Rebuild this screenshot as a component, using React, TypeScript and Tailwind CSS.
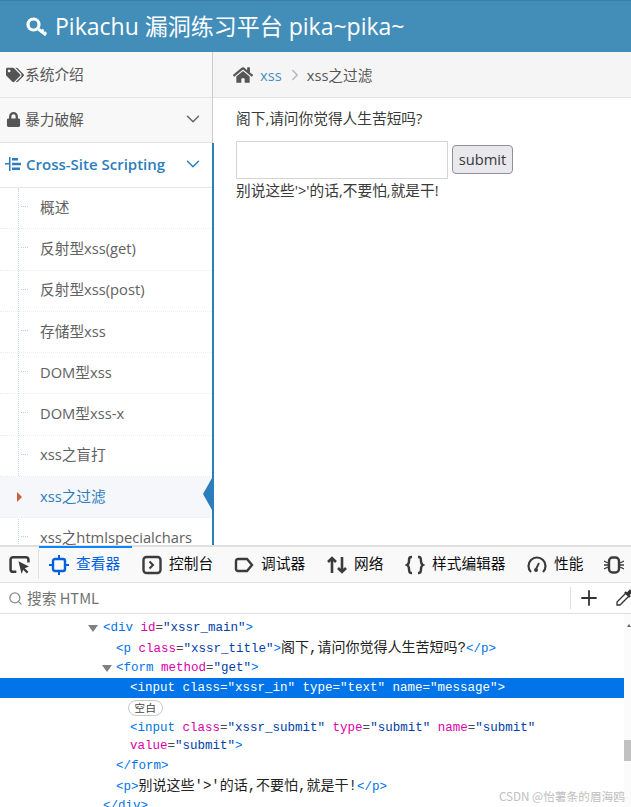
import { ChevronDown, ChevronRight, Plus, Search } from "lucide-react";
import { FaHome, FaLock, FaTags } from "react-icons/fa";

const cjk = '"Open Sans", "Noto Sans CJK SC", sans-serif';

const subItems = [
  "概述",
  "反射型xss(get)",
  "反射型xss(post)",
  "存储型xss",
  "DOM型xss",
  "DOM型xss-x",
  "xss之盲打",
  "xss之过滤",
  "xss之htmlspecialchars",
];

const Tabs = [
  { label: "查看器", active: true, w: "w-[93px]" },
  { label: "控制台", w: "w-[92px]" },
  { label: "调试器", w: "w-[93px]" },
  { label: "网络", w: "w-[78px]" },
  { label: "样式编辑器", w: "w-[122px]" },
  { label: "性能", w: "w-[87px]" },
];

function TabIcon({ i }: { i: number }) {
  const c = i === 0 ? "#0060df" : "#3b3b3b";
  return (
    <svg width="20" height="20" viewBox="0 0 20 20" fill="none" stroke={c} strokeWidth="2.4">
      {i === 0 && (
        <>
          <rect x="4" y="4" width="12" height="12" rx="2" />
          <path d="M10 0v4M10 16v4M0 10h4M16 10h4" strokeWidth="2" />
        </>
      )}
      {i === 1 && (
        <>
          <rect x="1.500" y="2" width="17" height="16" rx="3" />
          <path d="M7.500 6.500l3.500 3.500-3.500 3.500" strokeWidth="2" />
        </>
      )}
      {i === 2 && <path d="M2 6a2 2 0 0 1 2-2h9l5 6-5 6H4a2 2 0 0 1-2-2z" />}
      {i === 3 && <path d="M5 18V3M1 7l4-4 4 4M15 2v15M11 13l4 4 4-4" strokeWidth="2.6" />}
      {i === 4 && (
        <path d="M7 2H6C4 2 4 4 4 6s0 3-2 4c2 1 2 2 2 4s0 4 2 4h1M13 2h1c2 0 2 2 2 4s0 3 2 4c-2 1-2 2-2 4s0 4-2 4h-1" strokeWidth="2.4" />
      )}
      {i === 5 && (
        <>
          <path d="M4 17A8.500 8.500 0 1 1 16 17" strokeWidth="2.2" />
          <path d="M9 14l3-6" strokeWidth="1.8" />
          <circle cx="9" cy="15" r="2" fill={c} stroke="none" />
        </>
      )}
    </svg>
  );
}

function Tk({ c, children }: { c: string; children: React.ReactNode }) {
  return <span className={c}>{children}</span>;
}

const blue = "text-[#0074e8]";
const pink = "text-[#dd00a9]";
const gray = "text-[#4a4a4f]";
const zh = "text-[14px]";

export default function App() {
  return (
    <div className="flex h-[807px] w-[631px] flex-col overflow-hidden bg-white">
      {/* page */}
      <div className="h-[545px] shrink-0 overflow-hidden" style={{ fontFamily: cjk }}>
        <div className="flex h-[52px] items-center gap-[7px] border-t border-[#3a7fa8] bg-[#438eb9] pl-[26px] text-[23px] text-white">
          <svg width="22" height="20" viewBox="0 0 22 20" fill="none" stroke="#fff" className="shrink-0">
            <circle cx="7.500" cy="7.500" r="5.500" strokeWidth="3.200" />
            <path d="M11 11l9 7" strokeWidth="3" />
            <path d="M15 15l2.500-2.500M18 17l2-2" strokeWidth="2.400" />
          </svg>
          <span>Pikachu 漏洞练习平台 pika~pika~</span>
        </div>
        <div className="flex">
          {/* sidebar */}
          <div className="w-[213px] shrink-0 border-r border-[#cccccc] text-[14.7px] text-[#585858]">
            <div className="flex h-[46px] items-center border-b border-[#e5e5e5] bg-[#f8f8f8] pl-[6px]">
              <FaTags className="mr-[1px] size-[18px] text-[#555]" />
              <span>系统介绍</span>
            </div>
            <div className="flex h-[45px] items-center border-b border-[#e5e5e5] bg-[#f8f8f8] pb-[2px] pl-[6px] pr-[8px]">
              <FaLock className="mr-[4px] size-[15px] text-[#555]" />
              <span className="flex-1">暴力破解</span>
              <ChevronDown className="size-[22px] text-[#666]" strokeWidth={1.6} />
            </div>
            <div className="relative -mr-[2px] border-r-2 border-[#2b7dbc]">
              <div className="flex h-[45px] items-center border-b border-[#e5e5e5] pb-[2px] pl-[5px] pr-[8px] font-semibold text-[#2b7dbc]">
                <svg className="mr-[5px] shrink-0" width="16" height="16" viewBox="0 0 16 16" fill="#2b7dbc">
                  <path d="M4 1h1.500v14H4zM0 7h4v1.500H0zM7 2h6v2.600H7zM7 6.800h9v2.400H7zM7 11.500h8V14H7z" />
                </svg>
                <span className="flex-1 text-[15px]">Cross-Site Scripting</span>
                <ChevronDown className="size-[22px]" strokeWidth={1.6} />
              </div>
              <div className="relative">
                <div className="absolute bottom-0 left-[18px] top-0 border-l border-dotted border-[#c3d9ea]" />
                {subItems.map((s) => (
                  <div
                    key={s}
                    className={`relative flex h-[41.3px] items-center border-b border-dotted border-[#ececec] pb-[3px] pl-[40px] ${
                      s === "xss之过滤" ? "bg-[#f5f7fa] text-[#2b7dbc]" : "text-[#616161]"
                    }`}
                  >
                    {s === "xss之过滤" ? (
                      <>
                        <span className="absolute left-[17px] top-[15px] border-y-[5px] border-l-[5px] border-y-transparent border-l-[#c86139]" />
                        <span className="absolute right-0 top-[1px] border-y-[16px] border-r-[9px] border-y-transparent border-r-[#2b7dbc]" />
                      </>
                    ) : (
                      <span className="absolute left-[21px] top-[18px] w-[7px] border-t border-dotted border-[#b5cfe3]" />
                    )}
                    {s}
                  </div>
                ))}
              </div>
            </div>
          </div>
          {/* main */}
          <div className="min-w-0 flex-1 text-[14.7px] text-[#393939]">
            <div className="flex h-[46px] items-center border-b border-[#e5e5e5] bg-[#f5f5f5] pl-[20px] text-[#555]">
              <FaHome className="mr-[7px] size-[20px]" />
              <span className="pt-[1px] text-[#4c8fbd]">xss</span>
              <ChevronRight className="ml-[4px] mr-[3px] size-[18px] text-[#b2b6bf]" />
              <span className="pt-[1px]">xss之过滤</span>
            </div>
            <div className="pl-[23px]">
              <p className="mt-[10px] h-[20px] leading-[20px]">阁下,请问你觉得人生苦短吗?</p>
              <div className="mt-[13px] flex items-center">
                <input className="h-[38px] w-[212px] border border-[#d5d5d5] bg-white" />
                <input
                  type="submit"
                  value="submit"
                  className="-mt-px ml-[4px] h-[29px] w-[61px] rounded-[4px] border border-[#8f8f9d] bg-[#e9e9ed] text-[14.7px] text-[#393939]"
                />
              </div>
              <p className="mt-[1px] h-[20px] leading-[20px]">别说这些'&gt;'的话,不要怕,就是干!</p>
            </div>
          </div>
        </div>
      </div>
      {/* devtools */}
      <div className="relative flex min-h-0 flex-1 flex-col border-t-[2px] border-[#e0e0e2]" style={{ fontFamily: '"Noto Sans CJK SC", sans-serif' }}>
        <div className="flex h-[36px] shrink-0 items-center border-b border-[#e0e0e2] bg-[#f9f9fa] text-[14.7px] text-[#0c0c0d]">
          <div className="my-[3px] flex w-[39px] shrink-0 items-center justify-center self-stretch border-r border-[#e0e0e2]">
            <svg width="21" height="21" viewBox="0 0 20 20" fill="none">
              <path d="M7 17H4a2.500 2.500 0 0 1-2.500-2.500v-9A2.500 2.500 0 0 1 4 3h12a2.500 2.500 0 0 1 2.500 2.500V8" stroke="#3b3b3b" strokeWidth="2.400" />
              <path d="M9 7l10 5-4 1.500L18.500 17l-1.500 1.500-3.500-3.500L12 19z" fill="#3b3b3b" />
            </svg>
          </div>
          {Tabs.map((t, i) => (
            <div
              key={t.label}
              className={`relative flex h-full shrink-0 items-center gap-[7px] pl-[10px] ${t.w} ${t.active ? "text-[#0060df]" : ""}`}
            >
              {t.active && <span className="absolute -top-[1px] left-0 h-[2px] w-full bg-[#0a84ff]" />}
              <TabIcon i={i} />
              <span className="-mt-[2px]">{t.label}</span>
            </div>
          ))}
          <svg className="shrink-0" width="20" height="20" viewBox="0 0 20 20" fill="none" stroke="#3b3b3b" strokeWidth="2.400">
            <rect x="5" y="2.500" width="10" height="15" rx="3.500" />
            <path d="M0 6l4 2M0 10h4M0 14l4-2M20 6l-4 2M20 10h-4M20 14l-4-2" strokeWidth="1.300" />
          </svg>
        </div>
        <div className="flex h-[31px] shrink-0 items-center border-b border-[#e0e0e2] pl-[8px] text-[14.7px] text-[#737373]">
          <Search className="mr-[4px] size-[15px] text-[#8a8a8a]" />
          <span className="flex-1">搜索 HTML</span>
          <div className="flex h-[22px] w-[61px] items-center border-l border-[#e0e0e2] pl-[6px]">
            <Plus className="size-[24px] shrink-0 text-[#333]" strokeWidth={1.8} />
            <svg className="ml-[14px] shrink-0" width="18" height="18" viewBox="0 0 18 18" fill="none" stroke="#333" strokeWidth="1.300">
              <path d="M11 4L2 13v3h3l9-9" />
              <path d="M10 3l5 5M12 5l3-3 1 1-3 3" strokeWidth="2.400" />
            </svg>
          </div>
        </div>
        <div className="relative flex-1 overflow-hidden font-['Liberation_Mono',_'Noto_Sans_CJK_SC',monospace] text-[12.5px] leading-[20px] text-[#003eaa]">
          <div className="pt-[4px]">
            <div className="relative pl-[103px]">
              <span className="absolute left-[88px] top-[7px] border-x-[5px] border-t-[7px] border-x-transparent border-t-[#808080]" />
              <Tk c={blue}>&lt;div</Tk> <Tk c={pink}>id</Tk><Tk c={gray}>=</Tk>"xssr_main"<Tk c={blue}>&gt;</Tk>
            </div>
            <div className="h-[20px] pl-[116px]">
              <Tk c={blue}>&lt;p</Tk> <Tk c={pink}>class</Tk><Tk c={gray}>=</Tk>"xssr_title"<Tk c={blue}>&gt;</Tk>
              <Tk c={`${zh} text-[#222]`}>阁下,请问你觉得人生苦短吗?</Tk>
              <Tk c={blue}>&lt;/p&gt;</Tk>
            </div>
            <div className="relative pl-[116px]">
              <span className="absolute left-[102px] top-[7px] border-x-[5px] border-t-[7px] border-x-transparent border-t-[#808080]" />
              <Tk c={blue}>&lt;form</Tk> <Tk c={pink}>method</Tk><Tk c={gray}>=</Tk>"get"<Tk c={blue}>&gt;</Tk>
            </div>
            <div className="w-[624px] bg-[#0074e8] pl-[130px] text-white">
              &lt;input class="xssr_in" type="text" name="message"&gt;
            </div>
            <div className="flex h-[20px] items-center pl-[128px]">
              <span className="flex h-[16px] w-[35px] items-center justify-center rounded-full border border-[#c8c8c8] text-[10.500px] tracking-[0.5px] text-[#444]" style={{ fontFamily: '"Noto Sans CJK SC", sans-serif' }}>
                空白
              </span>
            </div>
            <div className="pl-[130px]">
              <Tk c={blue}>&lt;input</Tk> <Tk c={pink}>class</Tk><Tk c={gray}>=</Tk>"xssr_submit" <Tk c={pink}>type</Tk><Tk c={gray}>=</Tk>"submit" <Tk c={pink}>name</Tk><Tk c={gray}>=</Tk>"submit"
            </div>
            <div className="-mt-[2px] pl-[130px]">
              <Tk c={pink}>value</Tk><Tk c={gray}>=</Tk>"submit"<Tk c={blue}>&gt;</Tk>
            </div>
            <div className="pl-[116px]">
              <Tk c={blue}>&lt;/form&gt;</Tk>
            </div>
            <div className="h-[20px] pl-[116px]">
              <Tk c={blue}>&lt;p&gt;</Tk>
              <Tk c={`${zh} text-[#222]`}>别说这些'&gt;'的话,不要怕,就是干!</Tk>
              <Tk c={blue}>&lt;/p&gt;</Tk>
            </div>
            <div className="pl-[103px]">
              <Tk c={blue}>&lt;/div&gt;</Tk>
            </div>
          </div>
          {/* scrollbar */}
          <div className="absolute inset-y-0 right-0 w-[7px] bg-[#fbfbfb]">
            <span className="absolute left-[3px] top-[10px] border-x-[2px] border-b-[3px] border-x-transparent border-b-[#666]" />
            <div className="absolute bottom-[46px] h-[21px] w-[7px] bg-[#c1c1c1]" />
          </div>
          <span className="absolute bottom-[5px] right-[6px] text-[11.700px] leading-none text-[#c0c0c0]" style={{ fontFamily: '"Noto Sans CJK SC", sans-serif' }}>
            CSDN @怡薯条的眉海鸥
          </span>
        </div>
      </div>
    </div>
  );
}
